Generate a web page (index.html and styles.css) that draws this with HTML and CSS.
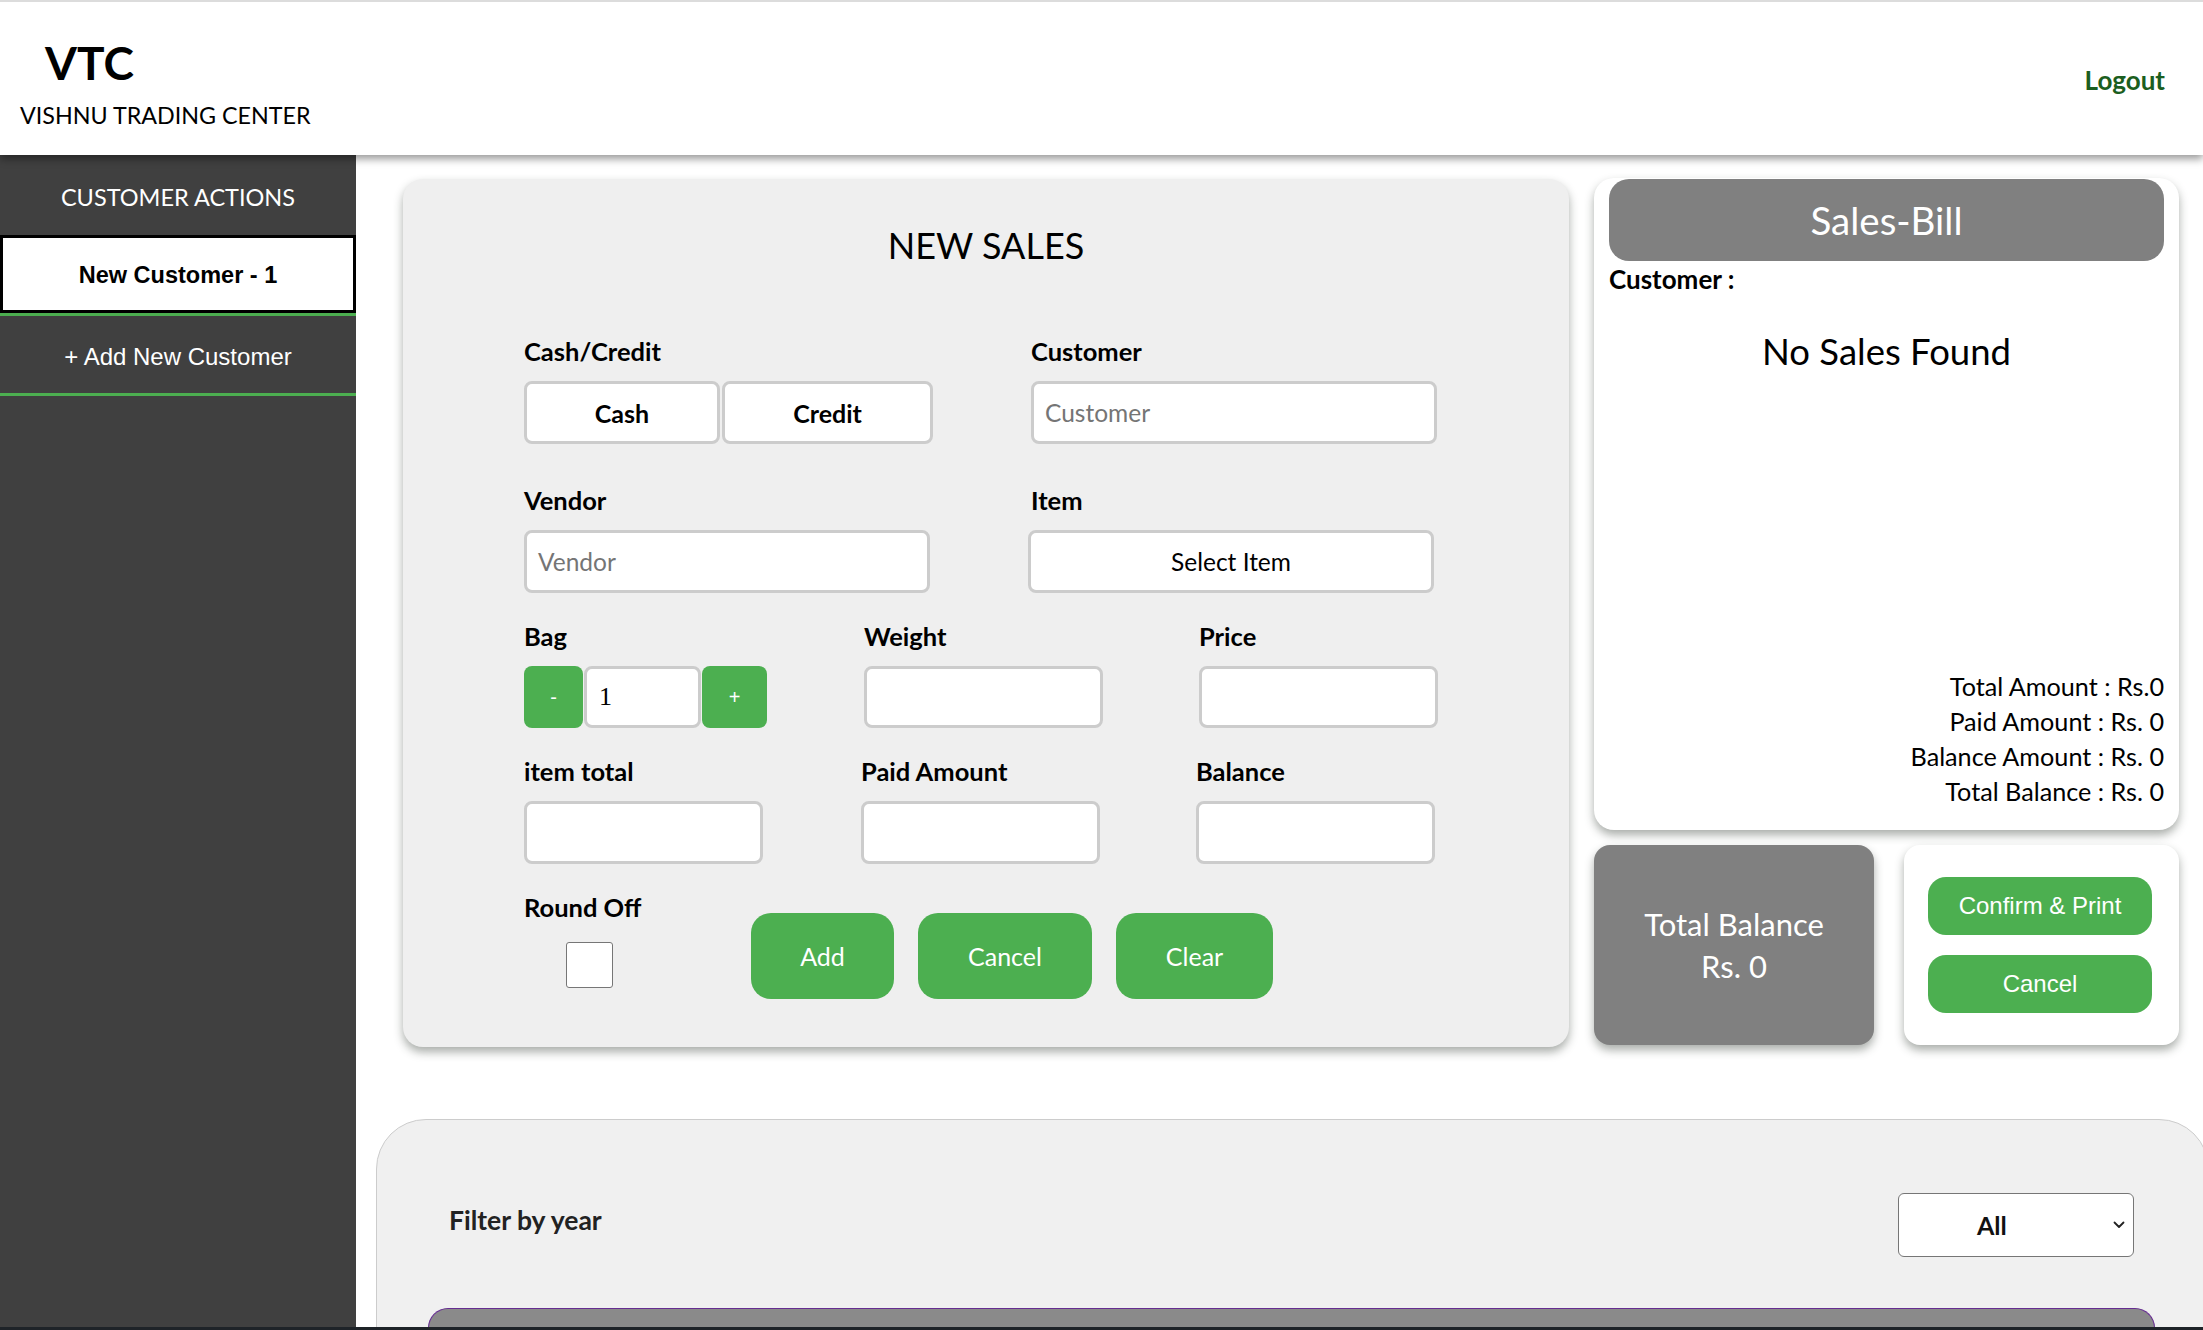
FILE: index.html
```html
<!DOCTYPE html>
<html lang="en">
<head>
<meta charset="utf-8">
<title>VTC - New Sales</title>
<link rel="stylesheet" href="styles.css">
</head>
<body>
<div class="app">
  <header class="topbar">
    <div class="brand">
      <div class="brand-logo">VTC</div>
      <div class="brand-name">VISHNU TRADING CENTER</div>
    </div>
    <a class="logout">Logout</a>
  </header>

  <div class="layout">
    <aside class="sidebar">
      <div class="side-title">CUSTOMER ACTIONS</div>
      <div class="side-item"><div class="side-tab">New Customer - 1</div></div>
      <div class="side-item side-add">+ Add New Customer</div>
    </aside>

    <main class="main">
      <div class="top-row">
        <section class="sales-card">
          <h2 class="sales-title">NEW SALES</h2>
          <div class="form">
            <div class="grid-two row-1">
              <div class="field">
                <div class="field-label">Cash/Credit</div>
                <div class="toggle">
                  <div class="toggle-btn cash">Cash</div>
                  <div class="toggle-btn credit">Credit</div>
                </div>
              </div>
              <div class="field">
                <div class="field-label">Customer</div>
                <div class="input wide placeholder">Customer</div>
              </div>
            </div>

            <div class="grid-two row-2">
              <div class="field">
                <div class="field-label">Vendor</div>
                <div class="input wide placeholder">Vendor</div>
              </div>
              <div class="field">
                <div class="field-label">Item</div>
                <div class="input wide select-item">Select Item</div>
              </div>
            </div>

            <div class="grid-three row-3">
              <div class="field">
                <div class="field-label">Bag</div>
                <div class="stepper">
                  <div class="step-btn minus">-</div>
                  <div class="input step-input">1</div>
                  <div class="step-btn plus">+</div>
                </div>
              </div>
              <div class="field">
                <div class="field-label">Weight</div>
                <div class="input small low"></div>
              </div>
              <div class="field">
                <div class="field-label">Price</div>
                <div class="input small low"></div>
              </div>
            </div>

            <div class="grid-three row-4">
              <div class="field">
                <div class="field-label">item total</div>
                <div class="input small"></div>
              </div>
              <div class="field">
                <div class="field-label shift">Paid Amount</div>
                <div class="input small shift"></div>
              </div>
              <div class="field">
                <div class="field-label shift">Balance</div>
                <div class="input small shift"></div>
              </div>
            </div>

            <div class="round-row">
              <div class="round-col">
                <div class="field-label">Round Off</div>
                <span class="checkbox"></span>
              </div>
              <div class="form-actions">
                <div class="btn-green btn-add">Add</div>
                <div class="btn-green btn-cancel">Cancel</div>
                <div class="btn-green btn-clear">Clear</div>
              </div>
            </div>
          </div>
        </section>

        <div class="bill-col">
          <section class="bill-card">
            <div class="bill-head">Sales-Bill</div>
            <div class="bill-customer">Customer :</div>
            <div class="no-sales">No Sales Found</div>
            <div class="totals">
              <div>Total Amount : Rs.0</div>
              <div>Paid Amount : Rs. 0</div>
              <div>Balance Amount : Rs. 0</div>
              <div>Total Balance : Rs. 0</div>
            </div>
          </section>
          <div class="bill-bottom">
            <div class="balance-card">
              <div>Total Balance</div>
              <div>Rs. 0</div>
            </div>
            <div class="action-card">
              <div class="action-btn">Confirm &amp; Print</div>
              <div class="action-btn">Cancel</div>
            </div>
          </div>
        </div>
      </div>

      <section class="history">
        <div class="filter-row">
          <div class="filter-label">Filter by year</div>
          <div class="year-select">
            <span class="year-value">All</span>
            <svg class="chev" width="12" height="8" viewBox="0 0 12 8"><polyline points="1.5,1.5 6,6 10.5,1.5" fill="none" stroke="#222" stroke-width="1.8" stroke-linecap="round" stroke-linejoin="round"/></svg>
          </div>
        </div>
        <div class="table-head"></div>
      </section>
    </main>
  </div>
  <div class="bottom-strip"></div>
</div>
</body>
</html>
```

FILE: styles.css
```css
* { box-sizing: border-box; }

html, body {
  margin: 0;
  height: 100%;
  overflow: hidden;
}

body {
  font-family: Lato, "Liberation Sans", sans-serif;
  color: #000;
  background: #fff;
}

.app {
  display: flex;
  flex-direction: column;
  height: 100vh;
}

/* ---------- header ---------- */
.topbar {
  flex: 0 0 155px;
  height: 155px;
  border-top: 2px solid #dcdcdc;
  background: #fff;
  display: flex;
  justify-content: space-between;
  align-items: center;
  padding: 0 38px 0 20px;
  box-shadow: 0 4px 8px rgba(0, 0, 0, 0.4);
  position: relative;
  z-index: 2;
}

.brand {
  align-self: flex-start;
  padding-top: 38px;
}

.brand-logo {
  font-size: 46px;
  font-weight: 700;
  line-height: 46px;
  margin-left: 25px;
}

.brand-name {
  font-size: 23.3px;
  line-height: 30px;
  margin-top: 14px;
}

.logout {
  font-size: 26px;
  font-weight: 700;
  color: #1b5e20;
  cursor: pointer;
  margin-top: 2px;
}

/* ---------- layout ---------- */
.layout {
  flex: 1;
  display: flex;
  min-height: 0;
}

.sidebar {
  flex: 0 0 356px;
  background: #404040;
  color: #fff;
}

.side-title {
  height: 80px;
  padding-top: 3px;
  display: flex;
  align-items: center;
  justify-content: center;
  font-size: 23.5px;
}

.side-item {
  border-bottom: 3px solid #4caf50;
}

.side-tab {
  height: 78px;
  background: #fff;
  color: #000;
  border: 3px solid #000;
  padding-top: 3px;
  display: flex;
  align-items: center;
  justify-content: center;
  font-family: "Liberation Sans", Arial, sans-serif;
  font-weight: 700;
  font-size: 23.5px;
}

.side-add {
  height: 80px;
  padding-top: 5px;
  display: flex;
  align-items: center;
  justify-content: center;
  font-family: "Liberation Sans", Arial, sans-serif;
  font-size: 24px;
}

.main {
  flex: 1;
  min-width: 0;
  overflow: hidden;
  padding: 24px 0 0 20px;
}

.top-row {
  display: flex;
  align-items: flex-start;
  gap: 25px;
  padding: 0 24px 0 27px;
}

/* ---------- new sales card ---------- */
.sales-card {
  flex: 0 0 1166px;
  background: #efefef;
  border-radius: 20px;
  box-shadow: 0 5px 10px rgba(40, 50, 40, 0.4);
  padding: 44px 0 48px;
}

.sales-title {
  margin: 0;
  text-align: center;
  font-size: 36px;
  font-weight: 400;
  line-height: 44px;
}

.form {
  padding-left: 121px;
}

.field-label {
  font-size: 25.5px;
  font-weight: 700;
  line-height: 30px;
  margin-bottom: 15px;
}

.field-label.shift { margin-left: -3px; }

.grid-two {
  display: grid;
  grid-template-columns: 410px 406px;
  column-gap: 97px;
}

.grid-three {
  display: grid;
  grid-template-columns: 244px 239px 239px;
  column-gap: 96px;
}

.row-1 { margin-top: 69px; }
.row-2 { margin-top: 41px; }
.row-3 { margin-top: 28px; }
.row-4 { margin-top: 28px; }

.input {
  height: 63px;
  background: #fff;
  border: 3px solid #ccc;
  border-radius: 8px;
  padding: 0 11px;
  display: flex;
  align-items: center;
  font-size: 24.5px;
}

.input.wide { width: 406px; }
.input.small { width: 239px; }
.input.low { height: 62px; }
.input.shift { margin-left: -3px; }

.placeholder { color: #757575; }

.select-item {
  justify-content: center;
  color: #000;
  margin-left: -3px;
}

.toggle {
  display: flex;
  gap: 2px;
}

.toggle-btn {
  height: 63px;
  background: #fff;
  border: 3px solid #ccc;
  border-radius: 8px;
  display: flex;
  align-items: center;
  justify-content: center;
  font-size: 25px;
  font-weight: 700;
}

.toggle-btn.cash { width: 196px; }
.toggle-btn.credit { width: 211px; }

.stepper {
  display: flex;
  gap: 1px;
}

.step-btn {
  height: 62px;
  background: #4caf50;
  color: #fff;
  border-radius: 8px;
  display: flex;
  align-items: center;
  justify-content: center;
  font-family: "Liberation Sans", Arial, sans-serif;
  font-size: 20px;
}

.step-btn.minus { width: 59px; }
.step-btn.plus { width: 65px; }

.step-input {
  width: 117px;
  height: 62px;
  font-family: "Liberation Serif", "Times New Roman", serif;
  font-size: 26px;
  padding: 0 12px;
}

.round-row {
  display: flex;
  align-items: flex-start;
  margin-top: 28px;
}

.round-col {
  width: 227px;
}

.round-col .field-label {
  margin-bottom: 20px;
}

.checkbox {
  display: block;
  width: 47px;
  height: 46px;
  margin-left: 42px;
  background: #fff;
  border: 1px solid #767676;
  border-radius: 3px;
}

.form-actions {
  display: flex;
  gap: 24px;
  margin-top: 21px;
}

.btn-green {
  height: 86px;
  background: #4caf50;
  color: #fff;
  border-radius: 20px;
  display: flex;
  align-items: center;
  justify-content: center;
  font-size: 25px;
}

.btn-add { width: 143px; }
.btn-cancel { width: 174px; }
.btn-clear { width: 157px; }

/* ---------- bill column ---------- */
.bill-col {
  flex: 0 0 585px;
  display: flex;
  flex-direction: column;
  gap: 15px;
  margin-top: -1px;
}

.bill-card {
  height: 652px;
  background: #fff;
  border-radius: 20px;
  box-shadow: 0 5px 10px rgba(40, 50, 40, 0.4);
  padding: 1px 15px 21px;
  display: flex;
  flex-direction: column;
}

.bill-head {
  height: 82px;
  background: #808080;
  color: #fff;
  border-radius: 20px;
  display: flex;
  align-items: center;
  justify-content: center;
  font-size: 38.5px;
}

.bill-customer {
  font-size: 26px;
  font-weight: 700;
  line-height: 28px;
  margin-top: 4px;
}

.no-sales {
  text-align: center;
  font-size: 36.5px;
  line-height: 44px;
  margin-top: 36px;
}

.totals {
  margin-top: auto;
  text-align: right;
  font-size: 25.2px;
  line-height: 35px;
}

.bill-bottom {
  display: flex;
  gap: 30px;
  height: 200px;
}

.balance-card {
  width: 280px;
  background: #808080;
  color: #fff;
  border-radius: 16px;
  box-shadow: 0 5px 10px rgba(40, 50, 40, 0.4);
  display: flex;
  flex-direction: column;
  align-items: center;
  justify-content: center;
  font-size: 31px;
  line-height: 42px;
}

.action-card {
  width: 275px;
  background: #fff;
  border-radius: 16px;
  box-shadow: 0 5px 10px rgba(40, 50, 40, 0.4);
  display: flex;
  flex-direction: column;
  justify-content: center;
  gap: 20px;
  padding-left: 24px;
}

.action-btn {
  width: 224px;
  height: 58px;
  background: #4caf50;
  color: #fff;
  border-radius: 18px;
  display: flex;
  align-items: center;
  justify-content: center;
  font-family: "Liberation Sans", Arial, sans-serif;
  font-size: 24px;
}

/* ---------- history ---------- */
.history {
  margin-top: 72px;
  margin-right: -6px;
  height: 320px;
  background: #f0f0f0;
  border: 1px solid #ccc;
  border-radius: 50px;
  padding: 73px 74px 0 72px;
}

.filter-row {
  display: flex;
  justify-content: space-between;
  align-items: center;
}

.filter-label {
  font-size: 26.5px;
  font-weight: 700;
  color: #222;
  margin-bottom: 10px;
}

.year-select {
  width: 236px;
  height: 64px;
  background: #fff;
  border: 1px solid #767676;
  border-radius: 6px;
  display: flex;
  align-items: center;
  padding: 0 8px 0 78px;
}

.year-value {
  font-size: 25px;
  font-weight: 700;
  color: #111;
}

.chev {
  margin-left: auto;
}

.table-head {
  margin: 51px -21px 0;
  height: 60px;
  background: #8a8a8a;
  border: 1px solid #662d91;
  border-bottom: none;
  border-radius: 20px 20px 0 0;
}

.bottom-strip {
  flex: 0 0 3px;
  background: #1e2328;
}
```
